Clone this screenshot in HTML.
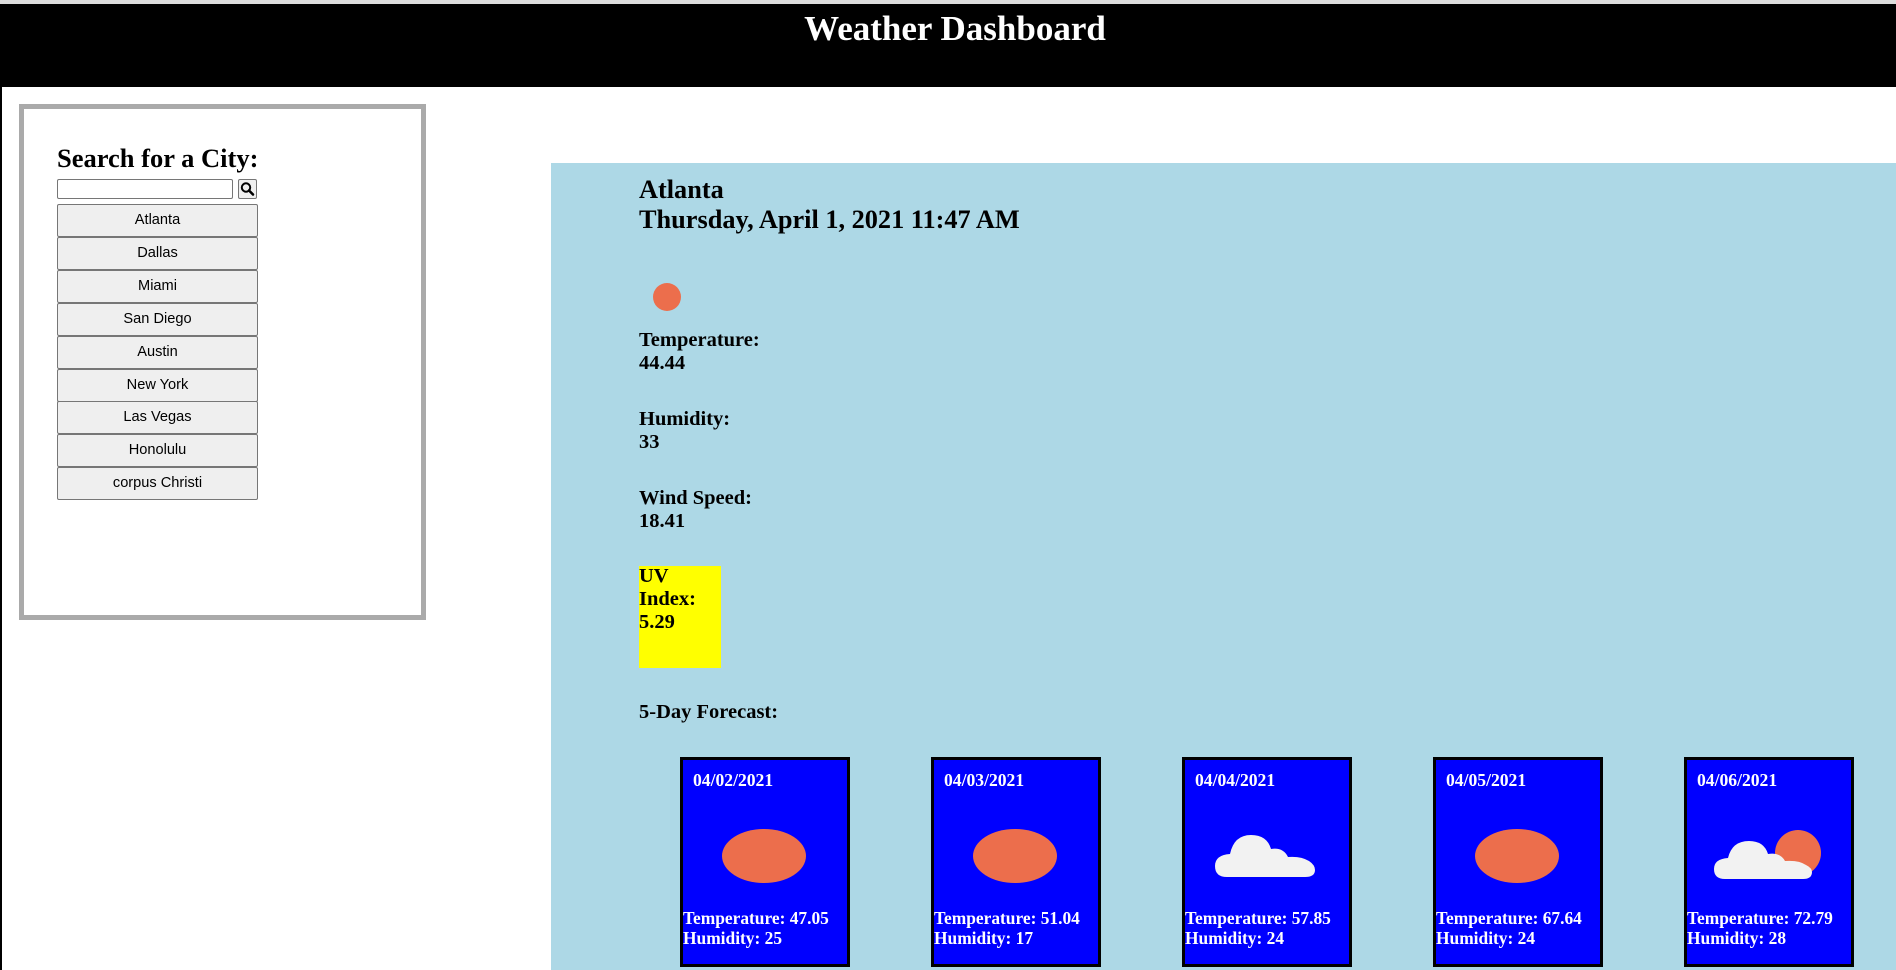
<!DOCTYPE html>
<html><head><meta charset="utf-8"><style>
*{margin:0;padding:0;box-sizing:border-box}
html,body{width:1896px;height:970px;overflow:hidden;background:#fff;font-family:"Liberation Serif",serif;position:relative}
.abs{position:absolute}
#top{left:0;top:0;width:1896px;height:4px;background:#ddd}
#hdr{left:0;top:4px;width:1896px;height:83px;background:#000}
#hdr h1{position:absolute;left:0;width:1910px;top:5px;text-align:center;color:#fff;font-size:35px;font-weight:bold}
#lline{left:0;top:87px;width:2px;height:883px;background:#000}
#side{left:19px;top:104px;width:407px;height:516px;border:5px solid #aaa}
#side h2{position:absolute;left:33px;top:34px;font-size:26.5px;font-weight:bold;white-space:nowrap}
#inp{left:57px;top:179px;width:176px;height:20px;border:1px solid #767676;border-radius:2px;background:#fff}
#sb{left:238px;top:179px;width:19px;height:20px;border:1px solid #767676;border-radius:2px;background:#efefef}
.cb{position:absolute;left:57px;width:201px;height:33px;background:#efefef;border:1px solid #767676;border-radius:2px;font-family:"Liberation Sans",sans-serif;font-size:14.6px;text-align:center;line-height:31px;color:#000}
#main{left:551px;top:163px;width:1345px;height:807px;background:#add8e6}
.t{position:absolute;left:639px;font-weight:bold;white-space:nowrap;color:#000}
.big{font-size:26.3px;line-height:30px}
.md{font-size:20.5px;line-height:23px}
#uv{left:639px;top:566px;width:82px;height:102px;background:#ff0}
.card{position:absolute;top:757px;width:170px;height:210px;background:#00f;border:3px solid #000;color:#fff;font-weight:bold;font-size:17.4px}
.card .d{position:absolute;left:10px;top:10px;font-size:17.6px}
.card .tt{position:absolute;left:0;top:148px;line-height:20px;white-space:nowrap}
.card svg{position:absolute;left:0;top:60px}
</style></head><body>
<div class="abs" id="top"></div>
<div class="abs" id="hdr"><h1>Weather Dashboard</h1></div>
<div class="abs" id="lline"></div>
<div class="abs" id="side"><h2>Search for a City:</h2></div>
<div class="abs" id="inp"></div>
<div class="abs" id="sb"><svg width="17" height="18" viewBox="0 0 17 18"><circle cx="7" cy="7.5" r="4.2" fill="none" stroke="#000" stroke-width="2"/><path d="M10 10.5 L14 14.5" stroke="#000" stroke-width="2.6" stroke-linecap="round"/></svg></div>
<div class="cb" style="top:204px">Atlanta</div>
<div class="cb" style="top:237px">Dallas</div>
<div class="cb" style="top:270px">Miami</div>
<div class="cb" style="top:303px">San Diego</div>
<div class="cb" style="top:336px">Austin</div>
<div class="cb" style="top:369px">New York</div>
<div class="cb" style="top:401px">Las Vegas</div>
<div class="cb" style="top:434px">Honolulu</div>
<div class="cb" style="top:467px">corpus Christi</div>

<div class="abs" id="main"></div>
<div class="t big" style="top:175px">Atlanta</div>
<div class="t big" style="top:205px">Thursday, April 1, 2021 11:47 AM</div>
<div class="abs" style="left:653px;top:283px;width:28px;height:28px;border-radius:50%;background:#ec6e4c"></div>
<div class="t md" style="top:329px">Temperature:<br>44.44</div>
<div class="t md" style="top:408px">Humidity:<br>33</div>
<div class="t md" style="top:487px">Wind Speed:<br>18.41</div>
<div class="abs" id="uv"></div>
<div class="t md" style="top:565px">UV<br>Index:<br>5.29</div>
<div class="t md" style="top:701px">5-Day Forecast:</div>

<div class="card" style="left:680px"><div class="d">04/02/2021</div>
<svg width="164" height="80"><ellipse cx="81" cy="36" rx="42" ry="27" fill="#ec6e4c"/></svg>
<div class="tt">Temperature: 47.05<br>Humidity: 25</div></div>
<div class="card" style="left:931px"><div class="d">04/03/2021</div>
<svg width="164" height="80"><ellipse cx="81" cy="36" rx="42" ry="27" fill="#ec6e4c"/></svg>
<div class="tt">Temperature: 51.04<br>Humidity: 17</div></div>
<div class="card" style="left:1182px"><div class="d">04/04/2021</div>
<svg width="164" height="80"><path d="M42 57 Q30 57 30 46 Q30 35 45 34 Q49 15 66 15 Q82 15 86 29 Q98 27 103 37 Q116 36 124 41 Q130 45 130 50 Q130 57 120 57 Z" fill="#f2f2f2"/></svg>
<div class="tt">Temperature: 57.85<br>Humidity: 24</div></div>
<div class="card" style="left:1433px"><div class="d">04/05/2021</div>
<svg width="164" height="80"><ellipse cx="81" cy="36" rx="42" ry="27" fill="#ec6e4c"/></svg>
<div class="tt">Temperature: 67.64<br>Humidity: 24</div></div>
<div class="card" style="left:1684px"><div class="d">04/06/2021</div>
<svg width="164" height="80"><circle cx="111" cy="33" r="23" fill="#ec6e4c"/><path d="M38 59 Q27 59 27 49 Q27 39 41 38 Q45 21 62 21 Q77 21 81 34 Q93 32 98 41 Q112 40 119 45 Q125 48 125 52 Q125 59 116 59 Z" fill="#f2f2f2"/></svg>
<div class="tt">Temperature: 72.79<br>Humidity: 28</div></div>
</body></html>
